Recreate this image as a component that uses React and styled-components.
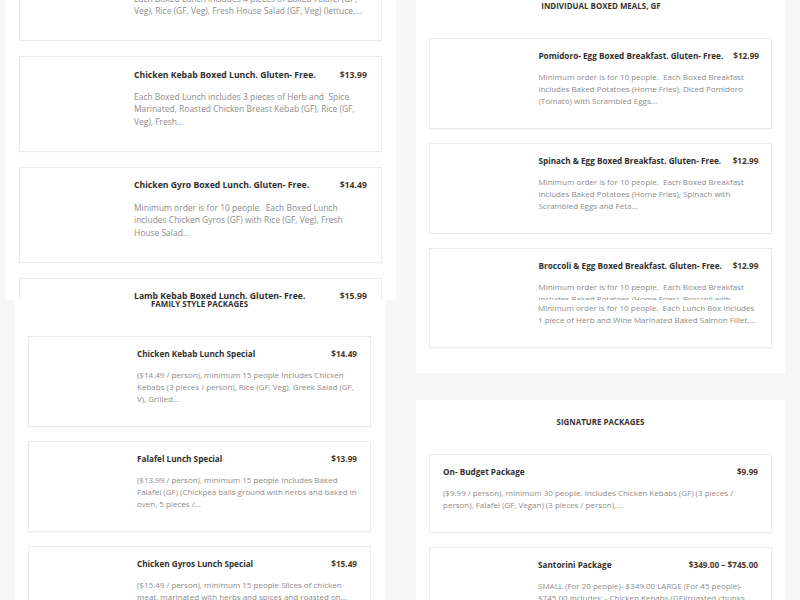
import styled, { createGlobalStyle } from "styled-components";

const boxedLunches = [
  {
    title: "Falafel Boxed Lunch. Gluten- Free.",
    price: "$13.99",
    text: "Each Boxed Lunch includes 4 pieces of Baked Falafel (GF, Veg), Rice (GF, Veg), Fresh House Salad (GF, Veg) (lettuce,...",
  },
  {
    title: "Chicken Kebab Boxed Lunch. Gluten- Free.",
    price: "$13.99",
    text: "Each Boxed Lunch includes 3 pieces of Herb and  Spice Marinated, Roasted Chicken Breast Kebab (GF), Rice (GF, Veg), Fresh...",
  },
  {
    title: "Chicken Gyro Boxed Lunch. Gluten- Free.",
    price: "$14.49",
    text: "Minimum order is for 10 people.  Each Boxed Lunch includes Chicken Gyros (GF) with Rice (GF, Veg), Fresh House Salad...",
  },
  {
    title: "Lamb Kebab Boxed Lunch. Gluten- Free.",
    price: "$15.99",
    text: "Minimum order is for 10 people.  Each Boxed Lunch includes Lamb Kebab (GF) with Rice (GF, Veg), Fresh House Salad...",
  },
];

const boxedMeals = [
  {
    title: "Pomidoro- Egg Boxed Breakfast. Gluten- Free.",
    price: "$12.99",
    text: "Minimum order is for 10 people.  Each Boxed Breakfast includes Baked Potatoes (Home Fries), Diced Pomidoro (Tomato) with Scrambled Eggs...",
  },
  {
    title: "Spinach & Egg Boxed Breakfast. Gluten- Free.",
    price: "$12.99",
    text: "Minimum order is for 10 people.  Each Boxed Breakfast includes Baked Potatoes (Home Fries), Spinach with Scrambled Eggs and Feta...",
  },
  {
    title: "Broccoli & Egg Boxed Breakfast. Gluten- Free.",
    price: "$12.99",
    text: "Minimum order is for 10 people.  Each Boxed Breakfast includes Baked Potatoes (Home Fries), Broccoli with Scrambled Eggs...",
  },
];

const salmon = [
  {
    title: "Salmon Boxed Lunch. Gluten- Free.",
    price: "$16.99",
    text: "Minimum order is for 10 people.  Each Lunch Box includes 1 piece of Herb and Wine Marinated Baked Salmon Fillet,...",
  },
];

const familyPackages = [
  {
    title: "Chicken Kebab Lunch Special",
    price: "$14.49",
    text: "($14.49 / person), minimum 15 people Includes Chicken Kebabs (3 pieces / person), Rice (GF, Veg), Greek Salad (GF, V), Grilled...",
  },
  {
    title: "Falafel Lunch Special",
    price: "$13.99",
    text: "($13.99 / person), minimum 15 people Includes Baked Falafel (GF) (Chickpea balls ground with herbs and baked in oven, 5 pieces /...",
  },
  {
    title: "Chicken Gyros Lunch Special",
    price: "$15.49",
    text: "($15.49 / person), minimum 15 people Slices of chicken meat, marinated with herbs and spices and roasted on...",
  },
];

const signaturePackages = [
  {
    title: "On- Budget Package",
    price: "$9.99",
    noImage: true,
    text: "($9.99 / person), minimum 30 people. Includes Chicken Kebabs (GF) (3 pieces / person), Falafel (GF, Vegan) (3 pieces / person),...",
  },
  {
    title: "Santorini Package",
    price: "$349.00 – $745.00",
    text: "SMALL (For 20 people)- $349.00 LARGE (For 45 people)- $745.00 Includes: - Chicken Kebabs (GF)(roasted chunks of...",
  },
];

function MenuList({ items }) {
  return (
    <Cards>
      {items.map((item) => (
        <Card key={item.title} $noImage={item.noImage}>
          <TitleRow>
            <Title>{item.title}</Title>
            <Price>{item.price}</Price>
          </TitleRow>
          <Desc>{item.text}</Desc>
        </Card>
      ))}
    </Cards>
  );
}

export default function App() {
  return (
    <>
      <GlobalStyle />
      <Page>
        <Slice $left={5} $gap={20}>
          <Column $offset={-40} $zoom={1.058}>
            <Panel $left={13} $right={14}>
              <MenuList items={boxedLunches} />
            </Panel>
          </Column>
          <Column $offset={-16}>
            <Panel>
              <Heading>INDIVIDUAL BOXED MEALS, GF</Heading>
              <MenuList items={boxedMeals} />
            </Panel>
          </Column>
        </Slice>

        <Slice $left={15} $gap={31}>
          <Column $offset={-18}>
            <Panel $left={13} $right={14}>
              <Heading>FAMILY STYLE PACKAGES</Heading>
              <MenuList items={familyPackages} />
            </Panel>
          </Column>
          <Column $offset={-31}>
            <Panel>
              <MenuList items={salmon} />
            </Panel>
            <Panel>
              <Heading>SIGNATURE PACKAGES</Heading>
              <MenuList items={signaturePackages} />
            </Panel>
          </Column>
        </Slice>
      </Page>
    </>
  );
}

const GlobalStyle = createGlobalStyle`
  html, body {
    margin: 0;
    background: #f6f7f6;
    font-family: "Open Sans", "Noto Sans", sans-serif;
  }
`;

const Page = styled.div`
  width: 800px;
  height: 600px;
  overflow: hidden;
  display: flex;
  flex-direction: column;
`;

const Slice = styled.div`
  height: 300px;
  overflow: hidden;
  display: flex;
  align-items: flex-start;
  gap: ${(p) => p.$gap}px;
  padding-left: ${(p) => p.$left}px;
`;

const Column = styled.div`
  margin-top: ${(p) => p.$offset}px;
  zoom: ${(p) => p.$zoom || 1};
  display: flex;
  flex-direction: column;
  gap: 27px;
`;

const Panel = styled.section`
  background: #fff;
  width: 343px;
  padding: 0 ${(p) => p.$right ?? 13}px 25px ${(p) => p.$left ?? 13}px;
`;

const Heading = styled.h2`
  margin: 0;
  padding: 16px 0 26px;
  text-align: center;
  font-size: 7.95px;
  line-height: 12px;
  font-weight: 700;
  color: #333;
`;

const Cards = styled.div`
  display: flex;
  flex-direction: column;
  gap: 14px;
`;

const Card = styled.article`
  background: #fff;
  border: 1px solid #ebebeb;
  box-shadow: 0 1px 2px rgba(0, 0, 0, 0.03);
  padding: 11px 13px 21px ${(p) => (p.$noImage ? 13 : 108)}px;
`;

const TitleRow = styled.div`
  display: flex;
  justify-content: space-between;
  align-items: center;
  gap: 10px;
  height: 12px;
  margin-bottom: 9px;
`;

const Title = styled.h3`
  margin: 0;
  font-size: 8.2px;
  line-height: 12px;
  font-weight: 700;
  color: #2f2f2f;
  white-space: nowrap;
`;

const Price = styled.span`
  font-size: 8.2px;
  line-height: 12px;
  font-weight: 700;
  color: #4a3728;
  white-space: nowrap;
`;

const Desc = styled.p`
  margin: 0;
  font-size: 8px;
  line-height: 12px;
  color: #8d8d8d;
  white-space: pre-wrap;
`;
